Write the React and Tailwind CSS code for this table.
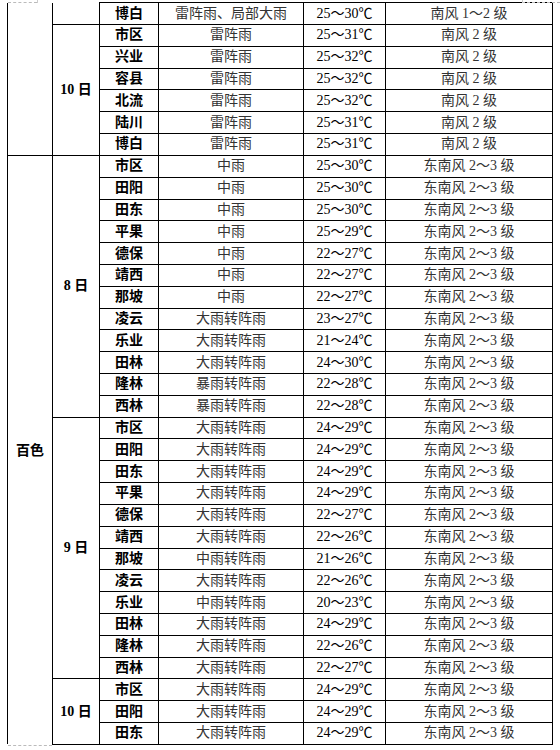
import React from 'react';

const SERIF = { fontFamily: '"Liberation Serif", "Noto Sans CJK SC", serif' };

const rain8 = [
  ['市区', '中雨', '25～30℃'],
  ['田阳', '中雨', '25～30℃'],
  ['田东', '中雨', '25～30℃'],
  ['平果', '中雨', '25～29℃'],
  ['德保', '中雨', '22～27℃'],
  ['靖西', '中雨', '22～27℃'],
  ['那坡', '中雨', '22～27℃'],
  ['凌云', '大雨转阵雨', '23～27℃'],
  ['乐业', '大雨转阵雨', '21～24℃'],
  ['田林', '大雨转阵雨', '24～30℃'],
  ['隆林', '暴雨转阵雨', '22～28℃'],
  ['西林', '暴雨转阵雨', '22～28℃'],
];

const rain9 = [
  ['市区', '大雨转阵雨', '24～29℃'],
  ['田阳', '大雨转阵雨', '24～29℃'],
  ['田东', '大雨转阵雨', '24～29℃'],
  ['平果', '大雨转阵雨', '24～29℃'],
  ['德保', '大雨转阵雨', '22～27℃'],
  ['靖西', '大雨转阵雨', '22～26℃'],
  ['那坡', '中雨转阵雨', '21～26℃'],
  ['凌云', '大雨转阵雨', '22～26℃'],
  ['乐业', '中雨转阵雨', '20～23℃'],
  ['田林', '大雨转阵雨', '24～29℃'],
  ['隆林', '大雨转阵雨', '22～26℃'],
  ['西林', '大雨转阵雨', '22～27℃'],
];

const rain10 = [
  ['市区', '大雨转阵雨', '24～29℃'],
  ['田阳', '大雨转阵雨', '24～29℃'],
  ['田东', '大雨转阵雨', '24～29℃'],
];

const yulin10 = [
  ['市区', '25～31℃'],
  ['兴业', '25～32℃'],
  ['容县', '25～32℃'],
  ['北流', '25～32℃'],
  ['陆川', '25～31℃'],
  ['博白', '25～31℃'],
];

const td = 'border border-black p-0 text-center align-middle leading-none';

function Cells({ county, weather, temp, wind }) {
  return (
    <>
      <td className={`${td} font-bold text-black`}>{county}</td>
      <td className={`${td} text-[#333] whitespace-nowrap`}>{weather}</td>
      <td className={`${td} text-black`}>{temp}</td>
      <td className={`${td} text-[#333]`}>{wind}</td>
    </>
  );
}

function DayGroup({ label, rows, first }) {
  return rows.map((r, i) => (
    <tr key={label + i} className="h-[21.82px]">
      {first && i === 0 && (
        <td rowSpan={28} className="border-x border-black p-0 text-center align-middle font-bold">
          百色
        </td>
      )}
      {i === 0 && (
        <td rowSpan={rows.length} className={`${td} font-bold`}>
          {label}
        </td>
      )}
      <Cells county={r[0]} weather={r[1]} temp={r[2]} wind="东南风 2～3 级" />
    </tr>
  ));
}

export default function App() {
  return (
    <div className="relative w-[560px] h-[750px] bg-white overflow-hidden text-[14px]" style={SERIF}>
      {/* page corner marks */}
      <div className="absolute left-[8px] top-[2px] w-[29px] border-t border-dashed border-[#bbb]" />
      <div className="absolute left-[37px] top-0 h-[3px] border-l border-[#ccc]" />
      <div className="absolute left-[522px] top-[2px] w-[38px] border-t border-dashed border-[#bbb]" />
      <div className="absolute left-[522px] top-0 h-[3px] border-l border-[#ccc]" />
      <div className="absolute left-[8px] top-[745px] w-[44px] border-t border-dashed border-[#bbb]" />

      <div className="pl-[7px] pt-[2px]">
        <table className="table-fixed border-collapse w-[545px]">
          <colgroup>
            <col className="w-[45px]" />
            <col className="w-[47px]" />
            <col className="w-[59px]" />
            <col className="w-[145px]" />
            <col className="w-[82px]" />
            <col className="w-[167px]" />
          </colgroup>
          <tbody>
            <tr className="h-[22px]">
              <td rowSpan={7} className="border-x border-b border-black p-0" />
              <td className="border-x border-b border-black p-0" />
              <Cells county="博白" weather="雷阵雨、局部大雨" temp="25～30℃" wind="南风 1～2 级" />
            </tr>
            {yulin10.map((r, i) => (
              <tr key={'y' + i} className="h-[21.82px]">
                {i === 0 && (
                  <td rowSpan={6} className={`${td} font-bold`}>
                    10 日
                  </td>
                )}
                <Cells county={r[0]} weather="雷阵雨" temp={r[1]} wind="南风 2 级" />
              </tr>
            ))}
            <DayGroup label="8 日" rows={rain8} first />
            <DayGroup label="9 日" rows={rain9} />
            <DayGroup label="10 日" rows={rain10} />
          </tbody>
        </table>
      </div>
    </div>
  );
}
